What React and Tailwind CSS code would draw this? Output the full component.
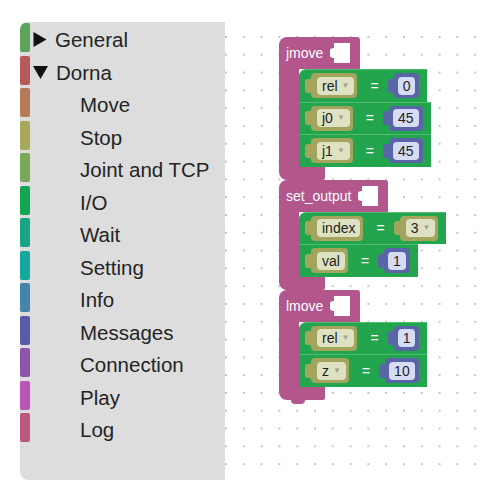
import React from "react";

const categories = [
  { name: "General", color: "bg-[#5ba55b]", arrow: "right" },
  { name: "Dorna", color: "bg-[#b85a5a]", arrow: "down" },
  { name: "Move", color: "bg-[#b57a57]" },
  { name: "Stop", color: "bg-[#a8a85a]" },
  { name: "Joint and TCP", color: "bg-[#78a858]" },
  { name: "I/O", color: "bg-[#12a552]" },
  { name: "Wait", color: "bg-[#17a584]" },
  { name: "Setting", color: "bg-[#14a89e]" },
  { name: "Info", color: "bg-[#4584ad]" },
  { name: "Messages", color: "bg-[#5a5aa8]" },
  { name: "Connection", color: "bg-[#8c56ad]" },
  { name: "Play", color: "bg-[#b956b5]" },
  { name: "Log", color: "bg-[#be5682]" },
];

function Toolbox() {
  return (
    <div className="w-[205px] h-full bg-[#dddddd] rounded-l-[8px] flex flex-col pt-[1px]">
      {categories.map((c) => (
        <div key={c.name} className="h-[32.5px] flex items-start shrink-0">
          <div className={`w-[10px] h-[29px] rounded-[2px] ${c.color}`} />
          {c.arrow === "right" && (
            <svg width="14" height="15" viewBox="0 0 14 15" className="ml-[3px] mt-[9px]">
              <polygon points="0.5,0 13.5,7.5 0.5,15" fill="#111" />
            </svg>
          )}
          {c.arrow === "down" && (
            <svg width="15" height="13" viewBox="0 0 15 13" className="ml-[3px] mt-[10px]">
              <polygon points="0,0 15,0 7.5,13" fill="#111" />
            </svg>
          )}
          <span
            className={`mt-[5px] text-[20.5px] leading-[23px] text-[#242424] whitespace-nowrap ${
              c.arrow ? "ml-[8px]" : "ml-[50px]"
            }`}
          >
            {c.name}
          </span>
        </div>
      ))}
    </div>
  );
}

function Field({ text, dd, light }) {
  return (
    <div
      className={`h-[18px] px-[5px] rounded-[4px] flex items-center gap-[4px] text-[14px] leading-none text-[#1e1e1e] ${light}`}
    >
      <span>{text}</span>
      {dd && <span className="text-[8px] text-[#a0a38a]">▼</span>}
    </div>
  );
}

function Olive({ text, dd }) {
  return (
    <div className="flex items-center">
      <div className="w-[6px] h-[14px] bg-[#a3a55e] rounded-l-[3px]" />
      <div className="h-[25px] bg-[#a3a55e] rounded-[4px] pl-[6px] pr-[3px] flex items-center">
        <Field text={text} dd={dd} light="bg-[#dfe2c2]" />
      </div>
    </div>
  );
}

function Blue({ text }) {
  return (
    <div className="flex items-center">
      <div className="w-[6px] h-[14px] bg-[#5a65a8] rounded-l-[3px]" />
      <div className="h-[25px] bg-[#5a65a8] rounded-[4px] pl-[4px] pr-[4px] flex items-center">
        <Field text={text} light="bg-[#d6dcf4]" />
      </div>
    </div>
  );
}

function Row({ name, dd, value, valueDd, first }) {
  return (
    <div
      className={`h-[32.5px] self-start flex items-center pl-[6px] pr-[8px] bg-[#22a54c] border-t border-[#4fbc72] ${
        first ? "rounded-tl-[7px]" : ""
      }`}
    >
      <Olive text={name} dd={dd} />
      <span className="ml-[13px] mr-[9px] text-white text-[14px] leading-none">=</span>
      {valueDd ? <Olive text={value} dd /> : <Blue text={value} />}
    </div>
  );
}

function Hole() {
  return (
    <svg width="20" height="20" viewBox="0 0 20 20" className="ml-[7px]">
      <path d="M4 0 H20 V20 H4 V15 C1 15 0 14 0 12.5 V7.5 C0 6 1 5 4 5 Z" fill="#ffffff" />
    </svg>
  );
}

function PinkBlock({ label, rows, last }) {
  return (
    <div className="flex flex-col">
      <div className="self-start h-[32px] bg-[#b3568c] rounded-tl-[8px] rounded-tr-[3px] flex items-center pl-[7px] pr-[10px]">
        <span className="text-white text-[14px] leading-none">{label}</span>
        <Hole />
      </div>
      <div className="flex">
        <div className="w-[20px] bg-[#b3568c]" />
        <div className="flex flex-col">
          {rows.map((r, i) => (
            <Row key={i} {...r} first={i === 0} />
          ))}
        </div>
      </div>
      <div className="w-[46px] h-[13px] bg-[#b3568c] rounded-bl-[8px] rounded-br-[2px]" />
      <div
        className={`ml-[12px] w-[14px] h-[4px] bg-[#b3568c] rounded-b-[4px] ${last ? "" : "-mb-[4px]"}`}
      />
    </div>
  );
}

export default function App() {
  return (
    <div
      className="w-[500px] h-[500px] bg-white pt-[22px] pl-[20px]"
      style={{ fontFamily: '"Liberation Sans", Arial, sans-serif' }}
    >
      <div className="w-[458px] h-[458px] flex rounded-[8px] overflow-hidden">
        <Toolbox />
        <div className="relative flex-1 h-full bg-white bg-[radial-gradient(circle,#c6c6c6_0.9px,transparent_1.3px)] bg-[length:17.8px_17.8px] bg-[position:-7.9px_6.1px]">
          <div className="absolute left-[54px] top-[15px] flex flex-col">
            <PinkBlock
              label="jmove"
              rows={[
                { name: "rel", dd: true, value: "0" },
                { name: "j0", dd: true, value: "45" },
                { name: "j1", dd: true, value: "45" },
              ]}
            />
            <PinkBlock
              label="set_output"
              rows={[
                { name: "index", value: "3", valueDd: true },
                { name: "val", value: "1" },
              ]}
            />
            <PinkBlock
              label="lmove"
              last
              rows={[
                { name: "rel", dd: true, value: "1" },
                { name: "z", dd: true, value: "10" },
              ]}
            />
          </div>
        </div>
      </div>
    </div>
  );
}
